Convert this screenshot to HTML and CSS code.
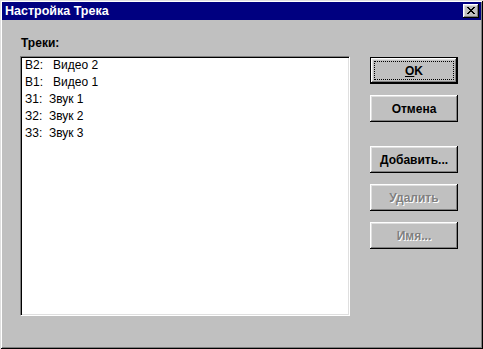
FILE: index.html
```html
<!DOCTYPE html>
<html lang="ru">
<head>
    <meta charset="UTF-8">
    <title>Настройка Трека</title>
    <link rel="stylesheet" href="styles.css">
</head>
<body>
    <div class="window">
        <div class="caption">
            <span class="caption-title">Настройка Трека</span>
            <button class="caption-close" aria-label="Закрыть">
                <svg width="8" height="7" viewBox="0 0 8 7" shape-rendering="crispEdges">
                    <path d="M0 0h2v1h1v1h2v-1h1v-1h2v1h-1v1h-1v1h-1v1h1v1h1v1h1v1h-2v-1h-1v-1h-2v1h-1v1h-2v-1h1v-1h1v-1h1v-1h-1v-1h-1v-1h-1z" fill="#000"/>
                </svg>
            </button>
        </div>

        <div class="dialog-body">
            <div class="tracks">
                <div class="field-label">Треки:</div>
                <ul class="track-list">
                    <li>В2:   Видео 2</li>
                    <li>В1:   Видео 1</li>
                    <li>З1:  Звук 1</li>
                    <li>З2:  Звук 2</li>
                    <li>З3:  Звук 3</li>
                </ul>
            </div>

            <div class="actions">
                <button class="btn btn-default"><u>O</u>K</button>
                <button class="btn">Отмена</button>
                <button class="btn btn-gap">Добавить...</button>
                <button class="btn" disabled>Удалить</button>
                <button class="btn" disabled>Имя...</button>
            </div>
        </div>
    </div>
</body>
</html>
```

FILE: styles.css
```css
* {
    margin: 0;
    padding: 0;
    box-sizing: border-box;
}
body {
    background: #c0c0c0;
    font-family: "Liberation Sans", Arial, sans-serif;
    font-size: 12px;
    color: #000;
}
.window {
    width: 483px;
    height: 349px;
    padding: 2px;
    background: #c0c0c0;
    box-shadow: inset 1px 1px #dfdfdf, inset -1px -1px #000,
                inset 2px 2px #fff, inset -2px -2px #808080;
}
.caption {
    height: 18px;
    background: #000080;
    color: #fff;
    font-size: 12.5px;
    font-weight: bold;
    display: flex;
    align-items: center;
    justify-content: space-between;
    padding: 0 2px 0 3px;
}
.caption-close {
    width: 16px;
    height: 14px;
    border: none;
    background: #c0c0c0;
    display: flex;
    align-items: center;
    justify-content: center;
    padding-bottom: 1px;
    box-shadow: inset -1px -1px #000, inset 1px 1px #fff,
                inset -2px -2px #808080, inset 2px 2px #dfdfdf;
}
.dialog-body {
    display: flex;
    padding: 16px 0 0 18px;
}
.field-label {
    font-weight: bold;
    line-height: 14px;
    margin-bottom: 6px;
    padding-left: 1px;
}
.track-list {
    list-style: none;
    width: 330px;
    height: 260px;
    background: #fff;
    border: 1px solid;
    border-color: #808080 #fff #fff #808080;
    box-shadow: inset 1px 1px #000, inset -1px -1px #dfdfdf;
    padding: 0 4px;
}
.track-list li {
    line-height: 17px;
    white-space: pre;
}
.actions {
    display: flex;
    flex-direction: column;
    margin-left: 20px;
    padding-top: 21px;
}
.btn {
    position: relative;
    width: 88px;
    height: 27px;
    margin-bottom: 11px;
    border: none;
    background: #c0c0c0;
    font-family: inherit;
    font-size: 12px;
    font-weight: bold;
    color: #000;
    box-shadow: inset -1px -1px #000, inset 1px 1px #fff,
                inset -2px -2px #808080, inset 2px 2px #dfdfdf;
}
.btn-gap {
    margin-top: 13px;
}
.btn-default {
    border: 1px solid #000;
}
.btn-default::after {
    content: "";
    position: absolute;
    inset: 3px;
    border: 1px dotted #000;
}
.btn:disabled {
    color: #808080;
    text-shadow: 1px 1px #fff;
}
```
